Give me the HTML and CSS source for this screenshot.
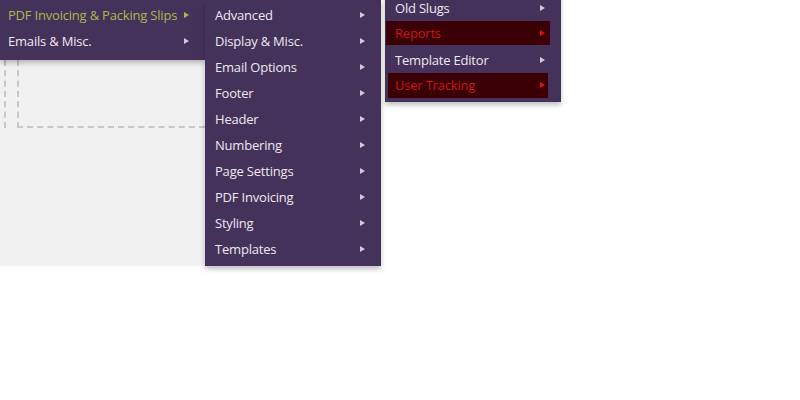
FILE: index.html
```html
<!DOCTYPE html>
<html lang="en">
<head>
    <meta charset="UTF-8">
    <title>Menu</title>
    <link rel="stylesheet" href="styles.css">
</head>
<body>
<div class="divPage">
    <div class="dropOuter">
        <div class="dropInner"></div>
    </div>
</div>

<ul class="menu menuTop">
    <li class="item itemActive">PDF Invoicing &amp; Packing Slips<span class="arrow"></span></li>
    <li class="item">Emails &amp; Misc.<span class="arrow"></span></li>
</ul>

<ul class="menu menuSub">
    <li class="item">Advanced<span class="arrow"></span></li>
    <li class="item">Display &amp; Misc.<span class="arrow"></span></li>
    <li class="item">Email Options<span class="arrow"></span></li>
    <li class="item">Footer<span class="arrow"></span></li>
    <li class="item">Header<span class="arrow"></span></li>
    <li class="item">Numbering<span class="arrow"></span></li>
    <li class="item">Page Settings<span class="arrow"></span></li>
    <li class="item">PDF Invoicing<span class="arrow"></span></li>
    <li class="item">Styling<span class="arrow"></span></li>
    <li class="item">Templates<span class="arrow"></span></li>
</ul>

<ul class="menu menuThird">
    <li class="item">Old Slugs<span class="arrow"></span></li>
    <li class="item itemAlert alertWide">Reports<span class="arrow"></span></li>
    <li class="item">Template Editor<span class="arrow"></span></li>
    <li class="item itemAlert alertNarrow">User Tracking<span class="arrow"></span></li>
</ul>
</body>
</html>
```

FILE: styles.css
```css
body{
    margin: 0;
    background-color: #fff;
    font-family: "Open Sans","Noto Sans",sans-serif;
    font-size: 13px;
    letter-spacing: -0.2px;
    position: relative;
    height: 400px;
    overflow: hidden;
}
.divPage{
    width: 205px;
    height: 266px;
    background-color: #f1f1f1;
    overflow: hidden;
}
.dropOuter{
    margin-top: 60px;
    margin-left: 4px;
    height: 68px;
    border-left: 2px dashed #c8c8c8;
}
.dropInner{
    margin-left: 11px;
    height: 66px;
    border-left: 2px dashed #c8c8c8;
    border-bottom: 2px dashed #c8c8c8;
}
.menu{
    list-style: none;
    margin: 0;
    position: absolute;
    background-color: #45325a;
    box-shadow: 0 3px 5px rgba(0,0,0,0.25);
}
.menuTop{
    left: 0;
    top: 0;
    width: 205px;
    padding: 2px 0 6px 0;
}
.menuSub{
    left: 205px;
    top: 0;
    width: 176px;
    padding: 2px 0 4px 0;
}
.menuThird{
    left: 385px;
    top: -5px;
    width: 176px;
    padding: 0 0 3px 0;
}
.item{
    height: 26px;
    line-height: 26px;
    padding-left: 8px;
    color: #ece8f0;
    position: relative;
    white-space: nowrap;
}
.menuSub .item,
.menuThird .item{
    padding-left: 10px;
}
.arrow{
    position: absolute;
    right: 16px;
    top: 10px;
    width: 0;
    height: 0;
    border-top: 3px solid transparent;
    border-bottom: 3px solid transparent;
    border-left: 5px solid #d0cad8;
}
.itemActive{
    color: #a8b94e;
}
.itemActive .arrow{
    border-left-color: #a8b94e;
}
.itemAlert{
    color: #c81818;
    background-color: #3a0006;
    height: 24px;
    line-height: 24px;
    margin-bottom: 2px;
}
.itemAlert .arrow{
    top: 9px;
    border-left-color: #e01010;
}
.alertWide{
    margin-left: 1px;
    margin-right: 11px;
}
.menuThird .alertWide{
    padding-left: 9px;
}
.alertWide .arrow{
    right: 5px;
}
.alertNarrow{
    margin-left: 3px;
    margin-right: 13px;
    margin-bottom: 1px;
    height: 25px;
    line-height: 25px;
}
.menuThird .alertNarrow{
    padding-left: 7px;
}
.alertNarrow .arrow{
    right: 3px;
}
```
